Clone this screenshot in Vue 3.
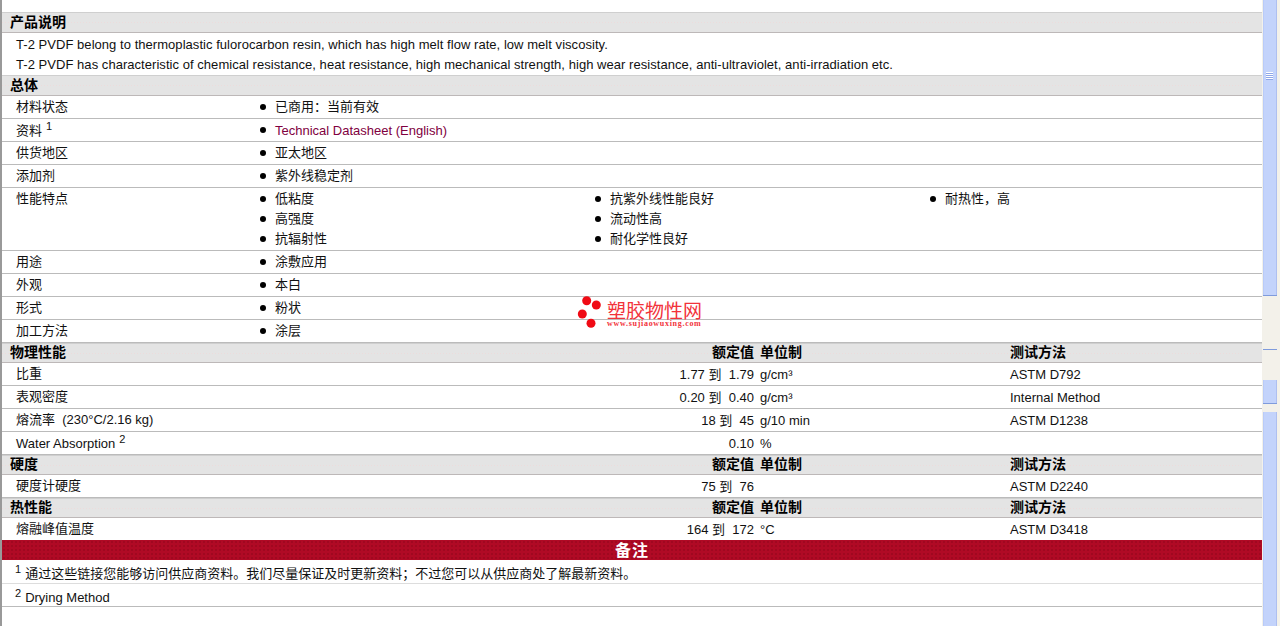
<script setup>
const logoDots = [
  { cx: 10.7, cy: 6.7, r: 4.5 },
  { cx: 20.3, cy: 11, r: 4.5 },
  { cx: 6.3, cy: 20, r: 4.5 },
  { cx: 15, cy: 29.3, r: 4.5 }
]
const basics = [
  { label: '材料状态', values: ['已商用：当前有效'] },
  { label: '资料', sup: '1', values: ['Technical Datasheet (English)'], link: true },
  { label: '供货地区', values: ['亚太地区'] },
  { label: '添加剂', values: ['紫外线稳定剂'] },
  { label: '性能特点', values: ['低粘度', '抗紫外线性能良好', '耐热性，高', '高强度', '流动性高', '', '抗辐射性', '耐化学性良好', ''], tall: true },
  { label: '用途', values: ['涂敷应用'] },
  { label: '外观', values: ['本白'] },
  { label: '形式', values: ['粉状'] },
  { label: '加工方法', values: ['涂层'] }
]
const groups = [
  {
    title: '物理性能',
    rows: [
      { label: '比重', low: '1.77', high: '1.79', unit: 'g/cm³', test: 'ASTM D792' },
      { label: '表观密度', low: '0.20', high: '0.40', unit: 'g/cm³', test: 'Internal Method' },
      { label: '熔流率\u00a0 (230°C/2.16 kg)', low: '18', high: '45', unit: 'g/10 min', test: 'ASTM D1238' },
      { label: 'Water Absorption', sup: '2', high: '0.10', unit: '%', test: '' }
    ]
  },
  { title: '硬度', rows: [{ label: '硬度计硬度', low: '75', high: '76', unit: '', test: 'ASTM D2240' }] },
  { title: '热性能', rows: [{ label: '熔融峰值温度', low: '164', high: '172', unit: '°C', test: 'ASTM D3418' }] }
]
</script>

<template>
  <div class="page">
    <main class="content">
      <h2 class="section">产品说明</h2>
      <div class="desc">
        <p>T-2 PVDF belong to thermoplastic fulorocarbon resin, which has high melt flow rate, low melt viscosity.</p>
        <p>T-2 PVDF has characteristic of chemical resistance, heat resistance, high mechanical strength, high wear resistance, anti-ultraviolet, anti-irradiation etc.</p>
      </div>
      <h2 class="section">总体</h2>
      <div v-for="row in basics" :key="row.label" class="row basic" :class="{ tall: row.tall }">
        <div class="label" :class="{ lowered: row.sup }">{{ row.label }}<sup v-if="row.sup">{{ row.sup }}</sup></div>
        <ul class="values">
          <li v-for="(v, i) in row.values" :key="i" :class="{ empty: !v, link: row.link }">{{ v }}</li>
        </ul>
      </div>
      <template v-for="group in groups" :key="group.title">
        <div class="section data-grid">
          <h2>{{ group.title }}</h2>
          <span class="num">额定值</span>
          <span>单位制</span>
          <span>测试方法</span>
        </div>
        <div v-for="r in group.rows" :key="r.label" class="row data-grid">
          <div class="label" :class="{ lowered: r.sup }">{{ r.label }}<sup v-if="r.sup">{{ r.sup }}</sup></div>
          <div class="num"><template v-if="r.low">{{ r.low }} 到&nbsp; </template>{{ r.high }}</div>
          <div>{{ r.unit }}</div>
          <div>{{ r.test }}</div>
        </div>
      </template>
      <h2 class="banner">备注</h2>
      <div class="note light"><sup>1</sup>通过这些链接您能够访问供应商资料。我们尽量保证及时更新资料；不过您可以从供应商处了解最新资料。</div>
      <div class="note"><sup>2</sup>Drying Method</div>

      <div class="logo">
        <svg width="31" height="36" viewBox="0 0 31 36" aria-hidden="true">
          <circle v-for="(d, i) in logoDots" :key="i" :cx="d.cx" :cy="d.cy" :r="d.r" fill="#f00a14" />
        </svg>
        <div class="logo-text">
          <strong>塑胶物性网</strong>
          <small>www.sujiaowuxing.com</small>
        </div>
      </div>
    </main>

    <aside class="scrollbar">
      <div class="thumb upper"><span class="grip"></span></div>
      <div class="gap"></div>
      <div class="thumb small"></div>
      <div class="thumb lower"></div>
    </aside>
  </div>
</template>

<style>
html, body { margin: 0; background: #fff; overflow: hidden; }
</style>

<style scoped>
.page {
  display: flex;
  height: 626px;
  width: 1280px;
  overflow: hidden;
  font: 13px/20px "Liberation Sans", "Noto Sans CJK SC", sans-serif;
  color: #111;
}
.content {
  position: relative;
  box-sizing: border-box;
  width: 1262px;
  padding: 12px 0 0;
  border-left: 2px solid #999;
}
h2 { margin: 0; font: inherit; font-weight: 700; }
.section {
  box-sizing: border-box;
  height: 21px;
  line-height: 19px;
  padding-left: 8px;
  background-color: #e4e4e4;
  background-image: repeating-linear-gradient(90deg, #ecdcdc 0 1px, transparent 1px 3px);
  background-size: 1240px 1px;
  background-position: 0 50%;
  background-repeat: no-repeat;
  border-top: 1px solid #cfcfcf;
  border-bottom: 1px solid #bdb8b8;
  color: #000;
  font-size: 14px;
  font-weight: 700;
}
.desc { height: 42px; padding: 2px 0 0 14px; box-sizing: border-box; letter-spacing: .045px; }
.desc p { margin: 0; height: 20px; }
.row {
  box-sizing: border-box;
  height: 23px;
  border-bottom: 1px solid #bbb;
  line-height: 22px;
}
.basic { display: grid; grid-template-columns: 258px 1fr; }
.basic.tall { height: 63px; }
.label { padding-left: 14px; }
.label.lowered { padding-top: 1px; }
.values {
  display: grid;
  grid-template-columns: repeat(3, 335px);
  margin: 0;
  padding: 0;
  list-style: none;
  grid-auto-rows: 20px;
}
.values li { position: relative; padding-left: 15px; }
.values li::before {
  content: "";
  position: absolute;
  left: 0;
  top: 8px;
  width: 6px;
  height: 6px;
  border-radius: 50%;
  background: #000;
}
.values li.empty::before { display: none; }
.link { color: #800040; padding-top: 1px; }
sup { font-size: 11px; line-height: 0; vertical-align: 5px; margin-left: 4px; }
.data-grid {
  display: grid;
  grid-template-columns: 540px 212px 256px 1fr;
}
.row.data-grid > :not(.label) { padding-top: 1px; }
.data-grid > :nth-child(3) { padding-left: 6px; }
.section.data-grid { grid-template-columns: 532px 212px 256px 1fr; height: 20px; line-height: 16px; }
.num { text-align: right; }
.banner {
  box-sizing: border-box;
  height: 20px;
  margin-top: -1px;
  background-color: #b00a25;
  background-image: radial-gradient(#a00820 30%, transparent 35%);
  background-size: 4px 4px;
  color: #fff;
  text-align: center;
  font: 700 16px/19px "Noto Sans CJK SC", sans-serif;
  letter-spacing: 1px;
}
.note {
  box-sizing: border-box;
  height: 23px;
  padding-left: 13px;
  line-height: 27px;
  border-bottom: 1px solid #bbb;
}
.note.light { border-bottom-color: #ddd; height: 24px; line-height: 28px; }
.note sup { margin: 0 4px 0 0; }
.logo {
  position: absolute;
  left: 574px;
  top: 294px;
  display: flex;
  align-items: flex-start;
  pointer-events: none;
}
.logo-text { display: flex; flex-direction: column; padding-top: 6px; }
.logo-text strong { font: 400 19px/19px "Noto Sans CJK SC", sans-serif; color: #f2323a; }
.logo-text small { font: 700 8px/10px "Liberation Serif", serif; color: #f2323a; letter-spacing: .7px; }
.scrollbar {
  box-sizing: border-box;
  width: 18px;
  height: 626px;
  display: flex;
  flex-direction: column;
  background: #f3f1ea;
  padding: 0 3px 0 1px;
}
.thumb { background: #c3d3fb; box-shadow: inset 1px 0 0 #b9cbf9, inset -1px 0 0 #aebff0; position: relative; }
.upper { height: 295px; border-bottom: 1px solid #7f9bdc; }
.grip {
  position: absolute;
  left: 3px;
  top: 72px;
  width: 7px;
  height: 8px;
  background: repeating-linear-gradient(#fff 0 1px, #8ea6e8 1px 2px);
}
.gap { height: 84px; background: linear-gradient(#f3f1ea 53px, #7f9bdc 53px 54px, #f3f1ea 54px); }
.small { height: 23px; border-bottom: 1px solid #7f9bdc; }
.lower { flex: 1; margin-top: 8px; }
</style>
